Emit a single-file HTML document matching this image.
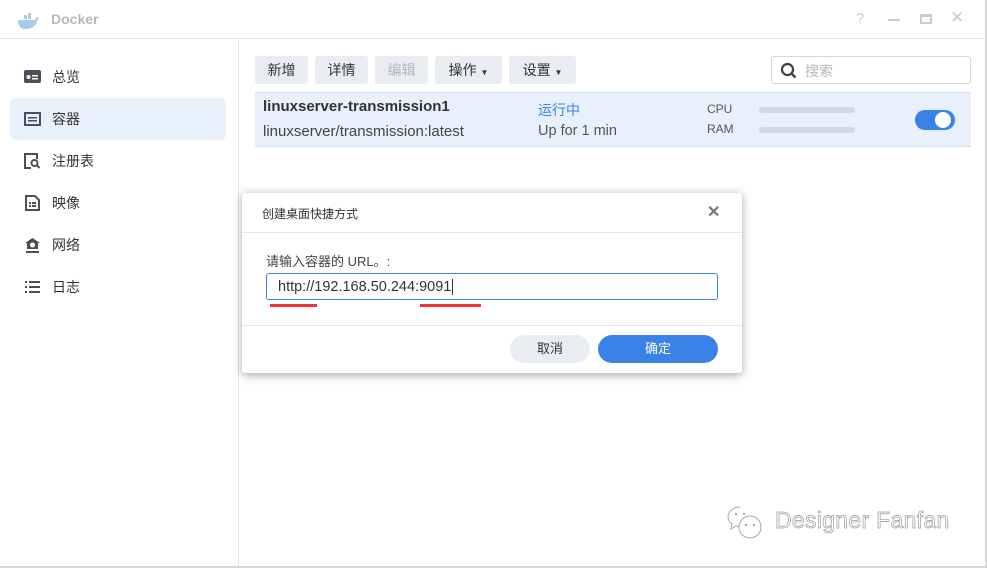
<!DOCTYPE html>
<html><head><meta charset="utf-8"><style>
*{box-sizing:border-box;margin:0;padding:0}
body{width:987px;height:568px;background:#fff;font-family:"Liberation Sans","Noto Sans CJK SC",sans-serif;position:relative;overflow:hidden;color:#333}
.abs{position:absolute}
.btn{position:absolute;top:56px;height:28px;background:#e9edf2;border-radius:3px;font-size:14px;line-height:28px;text-align:center;color:#333}
.nav{position:absolute;left:10px;width:216px;height:42px;font-size:14px;line-height:42px;padding-left:42px;color:#333;border-radius:6px}
.ic{position:absolute;left:14px;top:13px;width:17px;height:16px}
</style></head><body>
<div class="abs" style="left:0;top:0;width:987px;height:39px;border-bottom:1px solid #e3e6ea"></div>
<svg class="abs" style="left:16px;top:12px" width="24" height="18" viewBox="0 0 24 18"><path d="M2 8h17c1-3 3-3 4-2-1 1-1 2-2 3-1 6-7 8-12 8-4 0-7-3-7-9z" fill="#a9cbe8"/><rect x="8" y="3" width="3" height="4" fill="#a9cbe8"/><rect x="12" y="1" width="3" height="6" fill="#a9cbe8"/></svg>
<div class="abs" style="left:51px;top:11px;font-size:14px;font-weight:bold;color:#b5b9be">Docker</div>
<div class="abs" style="left:856px;top:10px;font-size:15px;color:#c9ccd0">?</div>
<div class="abs" style="left:888px;top:19px;width:12px;height:2px;background:#c9ccd0"></div>
<div class="abs" style="left:920px;top:14px;width:12px;height:10px;border:2px solid #c9ccd0;border-top-width:3px"></div>
<div class="abs" style="left:950px;top:8px;font-size:17px;color:#c9ccd0">✕</div>
<div class="abs" style="left:238px;top:40px;width:1px;height:528px;background:#e3e6ea"></div>
<div class="abs" style="left:985px;top:0;width:2px;height:568px;background:#d8d8d8"></div>
<div class="abs" style="left:0;top:566px;width:987px;height:2px;background:#d8d8d8"></div>

<div class="nav" style="top:56px"><svg class="ic" viewBox="0 0 17 16"><rect x="0" y="1" width="17" height="13" rx="2" fill="#4a5058"/><circle cx="4.5" cy="8" r="2" fill="#fff"/><rect x="8" y="6" width="6" height="1.5" fill="#fff"/><rect x="8" y="9" width="6" height="1.5" fill="#fff"/></svg>总览</div>
<div class="nav" style="top:98px;background:#e8f0fb"><svg class="ic" viewBox="0 0 17 16"><rect x="1" y="2" width="15" height="12" fill="none" stroke="#4a5058" stroke-width="2"/><rect x="4" y="6" width="9" height="1.5" fill="#4a5058"/><rect x="4" y="9" width="9" height="1.5" fill="#4a5058"/></svg>容器</div>
<div class="nav" style="top:140px"><svg class="ic" viewBox="0 0 17 16"><path d="M7 15H1V1h12v5" fill="none" stroke="#4a5058" stroke-width="2"/><circle cx="10.5" cy="10" r="3" fill="none" stroke="#4a5058" stroke-width="2"/><path d="M12.5 12l3 3" stroke="#4a5058" stroke-width="2"/></svg>注册表</div>
<div class="nav" style="top:182px"><svg class="ic" viewBox="0 0 17 16"><path d="M2 1h9l4 4v10H2z" fill="none" stroke="#4a5058" stroke-width="2"/><rect x="5" y="7" width="2" height="2" fill="#4a5058"/><rect x="8" y="7" width="4" height="2" fill="#4a5058"/><rect x="5" y="10" width="2" height="2" fill="#4a5058"/><rect x="8" y="10" width="4" height="2" fill="#4a5058"/></svg>映像</div>
<div class="nav" style="top:224px"><svg class="ic" viewBox="0 0 17 16"><path d="M8.5 1L1 6h2v6h11V6h2z" fill="#4a5058"/><circle cx="8.5" cy="8" r="2.5" fill="#fff"/><rect x="2" y="14" width="13" height="2" fill="#4a5058"/></svg>网络</div>
<div class="nav" style="top:266px"><svg class="ic" viewBox="0 0 17 16"><g fill="#4a5058"><rect x="1" y="2" width="2" height="2"/><rect x="5" y="2" width="11" height="2"/><rect x="1" y="7" width="2" height="2"/><rect x="5" y="7" width="11" height="2"/><rect x="1" y="12" width="2" height="2"/><rect x="5" y="12" width="11" height="2"/></g></svg>日志</div>

<div class="btn" style="left:255px;width:53px">新增</div>
<div class="btn" style="left:315px;width:53px">详情</div>
<div class="btn" style="left:375px;width:53px;color:#b3b7bc">编辑</div>
<div class="btn" style="left:435px;width:67px">操作 <span style="font-size:8px">▼</span></div>
<div class="btn" style="left:509px;width:67px">设置 <span style="font-size:8px">▼</span></div>
<div class="abs" style="left:771px;top:56px;width:200px;height:28px;border:1px solid #d5d9de;border-radius:3px"></div>
<svg class="abs" style="left:780px;top:62px" width="18" height="18" viewBox="0 0 18 18"><circle cx="7.5" cy="7.5" r="5.5" fill="none" stroke="#3d4249" stroke-width="2.2"/><path d="M11.5 11.5l4 4" stroke="#3d4249" stroke-width="2.4"/></svg>
<div class="abs" style="left:805px;top:61px;font-size:14px;color:#b3b7bc">搜索</div>

<div class="abs" style="left:255px;top:92px;width:716px;height:55px;background:#e8f0fb;border-top:1px solid #d8e2ee;border-bottom:1px solid #d8e2ee"></div>
<div class="abs" style="left:263px;top:98px;font-size:15px;font-weight:bold;color:#333">linuxserver-transmission1</div>
<div class="abs" style="left:263px;top:123px;font-size:15px;color:#444">linuxserver/transmission:latest</div>
<div class="abs" style="left:538px;top:100px;font-size:14px;color:#3b82e6">运行中</div>
<div class="abs" style="left:538px;top:123px;font-size:14.5px;color:#555">Up for 1 min</div>
<div class="abs" style="left:707px;top:102px;font-size:12px;color:#555">CPU</div>
<div class="abs" style="left:707px;top:122px;font-size:12px;color:#555">RAM</div>
<div class="abs" style="left:759px;top:107px;width:96px;height:6px;border-radius:3px;background:#d3d9e1"></div>
<div class="abs" style="left:759px;top:127px;width:96px;height:6px;border-radius:3px;background:#d3d9e1"></div>
<div class="abs" style="left:915px;top:110px;width:40px;height:20px;border-radius:10px;background:#3b82e6"></div>
<div class="abs" style="left:935px;top:112px;width:16px;height:16px;border-radius:8px;background:#fff"></div>

<div class="abs" style="left:242px;top:193px;width:500px;height:180px;background:#fff;border-radius:3px;box-shadow:0 2px 10px rgba(0,0,0,.35)"></div>
<div class="abs" style="left:262px;top:205px;font-size:12px;color:#333">创建桌面快捷方式</div>
<div class="abs" style="left:707px;top:202px;font-size:16px;color:#777;font-weight:bold">✕</div>
<div class="abs" style="left:242px;top:232px;width:500px;height:1px;background:#e3e6ea"></div>
<div class="abs" style="left:266px;top:251px;font-size:13px;color:#444">请输入容器的 URL。:</div>
<div class="abs" style="left:266px;top:273px;width:452px;height:27px;border:1px solid #3b82e6;border-radius:3px"></div>
<div class="abs" style="left:278px;top:279px;font-size:14.5px;color:#333">http://192.168.50.244:9091<span style="border-left:1px solid #333;margin-left:1px"></span></div>
<div class="abs" style="left:270px;top:304px;width:47px;height:3px;background:#ee3333"></div>
<div class="abs" style="left:420px;top:304px;width:61px;height:3px;background:#ee3333"></div>
<div class="abs" style="left:242px;top:325px;width:500px;height:1px;background:#e3e6ea"></div>
<div class="abs" style="left:510px;top:335px;width:80px;height:28px;border-radius:14px;background:#e9edf2;text-align:center;line-height:28px;font-size:13px">取消</div>
<div class="abs" style="left:598px;top:335px;width:120px;height:28px;border-radius:14px;background:#3b82e6;color:#fff;text-align:center;line-height:28px;font-size:13px">确定</div>

<svg class="abs" style="left:726px;top:505px" width="42" height="36" viewBox="0 0 42 36"><path d="M14 2C7 2 2 7 2 12c0 3 2 6 4 7l-1 5 5-3c1 0 3 1 4 1" fill="none" stroke="#aaa"/><circle cx="24" cy="22" r="11" fill="#fff" stroke="#aaa"/><circle cx="10" cy="9" r="1.2" fill="#aaa"/><circle cx="18" cy="9" r="1.2" fill="#aaa"/><circle cx="20" cy="20" r="1.2" fill="#aaa"/><circle cx="28" cy="20" r="1.2" fill="#aaa"/></svg>
<div class="abs" style="left:775px;top:507px;font-size:23px;color:#fff;-webkit-text-stroke:0.7px #999;letter-spacing:0.3px">Designer Fanfan</div>
</body></html>
